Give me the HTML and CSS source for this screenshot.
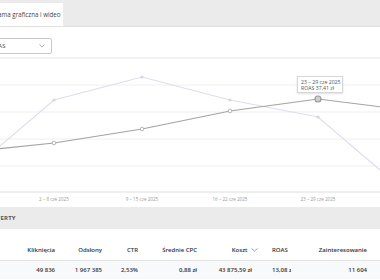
FILE: index.html
```html
<!DOCTYPE html>
<html lang="pl">
<head>
  <meta charset="UTF-8">
  <title>Skuteczność kampanii</title>
  <link rel="stylesheet" href="styles.css">
</head>
<body>
  <div class="page">
    <div class="tabbar">
      <div class="tab">Reklama graficzna i wideo</div>
    </div>

    <div class="toolbar">
      <div class="select">
        <span>ROAS</span>
        <svg width="6" height="4" viewBox="0 0 6 4"><path d="M0.5 0.5 L3 3 L5.5 0.5" fill="none" stroke="#999" stroke-width="0.8"/></svg>
      </div>
    </div>

    <div class="chart">
      <svg class="plot" width="400" height="148" viewBox="-20 61 400 148">
        <g class="grid">
          <line x1="-20" y1="87" x2="380" y2="87"/>
          <line x1="-20" y1="114" x2="380" y2="114"/>
          <line x1="-20" y1="141" x2="380" y2="141"/>
          <line x1="-20" y1="168" x2="380" y2="168"/>
        </g>
        <line class="axis" x1="-20" y1="194" x2="380" y2="194"/>

        <!-- poprzedni okres -->
        <polyline class="line-prev" points="-34,177 54,102 142,79 230,102 318,119 380,172"/>
        <g class="dots-prev">
          <circle cx="54" cy="102" r="1.6"/>
          <circle cx="142" cy="79" r="1.6"/>
          <circle cx="230" cy="102" r="1.6"/>
          <circle cx="318" cy="119" r="1.6"/>
        </g>

        <!-- ROAS -->
        <polyline class="line-main" points="-34,154 54,145 142,131 230,113 318,101 406,112"/>
        <g class="dots-main">
          <circle cx="54" cy="145" r="1.8"/>
          <circle cx="142" cy="131" r="1.8"/>
          <circle cx="230" cy="113" r="1.8"/>
        </g>
        <circle class="dot-active" cx="318" cy="101" r="3"/>

        <g class="xlabels">
          <text x="54" y="203">2 – 8 cze 2025</text>
          <text x="142" y="203">9 – 15 cze 2025</text>
          <text x="230" y="203">16 – 22 cze 2025</text>
          <text x="318" y="203">23 – 29 cze 2025</text>
        </g>
      </svg>

      <div class="tooltip">
        <div>23 – 29 cze 2025</div>
        <div>ROAS 37,41 zł</div>
      </div>
    </div>

    <div class="section-title">OFERTY</div>

    <div class="stats">
      <div class="cell head"></div>
      <div class="cell head">Kliknięcia</div>
      <div class="cell head">Odsłony</div>
      <div class="cell head">CTR</div>
      <div class="cell head">Średnie CPC</div>
      <div class="cell head sort">Koszt <svg width="7" height="4" viewBox="0 0 7 4"><path d="M0.5 0.5 L3.5 3 L6.5 0.5" fill="none" stroke="#888" stroke-width="0.8"/></svg></div>
      <div class="cell head left">ROAS</div>
      <div class="cell head">Zainteresowanie</div>
      <div class="cell head"></div>

      <div class="cell row"></div>
      <div class="cell row">49 836</div>
      <div class="cell row">1 967 385</div>
      <div class="cell row">2,53%</div>
      <div class="cell row">0,88 zł</div>
      <div class="cell row cost">43 875,59 zł</div>
      <div class="cell row left">13,08 zł</div>
      <div class="cell row">11 604</div>
      <div class="cell row"></div>
    </div>
  </div>
</body>
</html>
```

FILE: styles.css
```css
body {
  margin: 0;
  font-family: "Open Sans", Arial, sans-serif;
  color: #333;
  background: #fff;
  overflow: hidden;
}
.page {
  margin-left: -20px;
  width: 400px;
}

/* tabs */
.tabbar {
  height: 26px;
  background: #ebebeb;
  border-bottom: 1px solid #e2e2e2;
  display: flex;
  align-items: flex-end;
}
.tab {
  width: 77px;
  height: 23px;
  padding-left: 6px;
  background: #fff;
  font-size: 6.2px;
  line-height: 23px;
  color: #444;
  white-space: nowrap;
}

/* toolbar with metric select */
.toolbar {
  height: 32px;
  padding-top: 11px;
  box-sizing: border-box;
  border-bottom: 2px solid #f2f2f2;
}
.select {
  margin-left: 2px;
  width: 70px;
  height: 16px;
  box-sizing: border-box;
  border: 1px solid #c9c9c9;
  border-radius: 2px;
  display: flex;
  align-items: center;
  justify-content: space-between;
  padding: 0 6px 0 7px;
  font-size: 6px;
  color: #444;
}

/* chart */
.chart {
  position: relative;
  height: 148px;
}
.plot {
  display: block;
}
.grid line {
  stroke: #efefef;
  stroke-width: 1;
}
.axis {
  stroke: #dedede;
  stroke-width: 1;
}
.line-prev {
  fill: none;
  stroke: #dcdeef;
  stroke-width: 1.2;
}
.dots-prev circle {
  fill: #d3d6ea;
}
.line-main {
  fill: none;
  stroke: #a3a3a3;
  stroke-width: 1.2;
}
.dots-main circle {
  fill: #fff;
  stroke: #a3a3a3;
  stroke-width: 0.8;
}
.dot-active {
  fill: #cfcfcf;
  stroke: #9a9a9a;
  stroke-width: 1.2;
}
.xlabels text {
  font-family: "Open Sans", Arial, sans-serif;
  font-size: 4.6px;
  fill: #999;
  text-anchor: middle;
}
.tooltip {
  position: absolute;
  left: 317px;
  top: 17px;
  width: 46px;
  height: 17px;
  box-sizing: border-box;
  padding: 2px 3px;
  background: #fff;
  border: 1px solid #d6d6d6;
  box-shadow: 0 1px 2px rgba(0,0,0,0.12);
  font-size: 5.2px;
  line-height: 6.3px;
  color: #555;
  white-space: nowrap;
}

/* section header */
.section-title {
  height: 22px;
  background: #ebebeb;
  padding-left: 12px;
  font-size: 6px;
  font-weight: 700;
  line-height: 22px;
  color: #555;
  letter-spacing: 0.2px;
}

/* stats table */
.stats {
  display: grid;
  grid-template-columns: 40px 35px 47px 36px 59px 61px 33px 76px 13px;
  font-size: 6px;
  font-weight: 600;
  color: #333;
}
.cell {
  text-align: right;
  white-space: nowrap;
}
.cell.left {
  text-align: left;
  padding-left: 14px;
}
.head {
  height: 32px;
  line-height: 8px;
  padding-top: 17px;
  box-sizing: border-box;
  border-bottom: 1px solid #e4e4e4;
}
.sort svg {
  margin-left: 2px;
  vertical-align: middle;
}
.row {
  height: 18px;
  line-height: 18px;
  background: #f8f9fb;
}
.row.cost {
  padding-right: 6px;
}
```
